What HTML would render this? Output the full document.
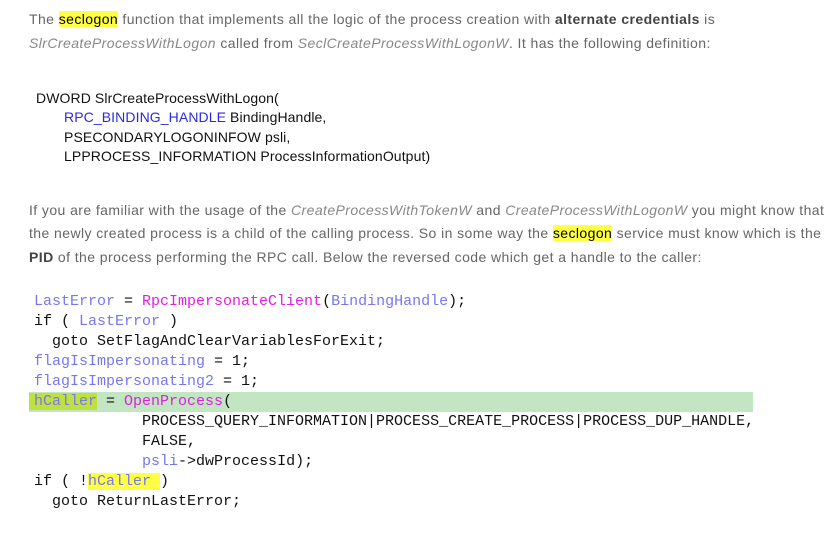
<!DOCTYPE html>
<html><head><meta charset="utf-8"><style>
html,body{margin:0;padding:0;background:#fff;width:840px;height:533px;overflow:hidden}
body{font-family:"Liberation Sans",sans-serif;color:#666;font-size:14px;position:relative}
.p{position:absolute;left:29px;line-height:23.5px;white-space:nowrap;letter-spacing:0.42px}
.hl{background:#ffff44;color:#000}
b{color:#444}
i{color:#888}
.def{position:absolute;left:36px;top:89px;color:#111;font-size:14px;line-height:19.3px;letter-spacing:0.1px;white-space:pre}
.def .ind{padding-left:28px}
.blue{color:#2a2ae0}
.code{position:absolute;left:0;top:292px;width:840px;font-family:"Liberation Mono","DejaVu Sans Mono",monospace;font-size:15px;line-height:20px;color:#111;white-space:pre}
.code div{padding-left:34px;height:20px}
.v{color:#7777ee}
.m{color:#e020e0}
.g{background:#c2e5c2;width:724px;padding-left:0!important;margin-left:29px}
.g span.h{background:#c0e040;padding-left:5px}
.y{background:#ffff44}
</style></head><body>
<div class="p" style="top:8px">The <span class="hl">seclogon</span> function that implements all the logic of the process creation with <b>alternate credentials</b> is</div>
<div class="p" style="top:32px"><i>SlrCreateProcessWithLogon</i> called from <i>SeclCreateProcessWithLogonW</i>. It has the following definition:</div>
<div class="def">DWORD SlrCreateProcessWithLogon(
<span class="ind"><span class="blue">RPC_BINDING_HANDLE</span> BindingHandle,</span>
<span class="ind">PSECONDARYLOGONINFOW psli,</span>
<span class="ind">LPPROCESS_INFORMATION ProcessInformationOutput)</span></div>
<div class="p" style="top:199px">If you are familiar with the usage of the <i>CreateProcessWithTokenW</i> and <i>CreateProcessWithLogonW</i> you might know that</div>
<div class="p" style="top:222px">the newly created process is a child of the calling process. So in some way the <span class="hl">seclogon</span> service must know which is the</div>
<div class="p" style="top:246px"><b>PID</b> of the process performing the RPC call. Below the reversed code which get a handle to the caller:</div>
<div class="code"><div><span class="v">LastError</span> = <span class="m">RpcImpersonateClient</span>(<span class="v">BindingHandle</span>);</div><div>if ( <span class="v">LastError</span> )</div><div>  goto SetFlagAndClearVariablesForExit;</div><div><span class="v">flagIsImpersonating</span> = 1;</div><div><span class="v">flagIsImpersonating2</span> = 1;</div><div class="g"><span class="h"><span class="v">hCaller</span></span> = <span class="m">OpenProcess</span>(</div><div>            PROCESS_QUERY_INFORMATION|PROCESS_CREATE_PROCESS|PROCESS_DUP_HANDLE,</div><div>            FALSE,</div><div>            <span class="v">psli</span>-&gt;dwProcessId);</div><div>if ( !<span class="y"><span class="v">hCaller</span> </span>)</div><div>  goto ReturnLastError;</div></div>
</body></html>
